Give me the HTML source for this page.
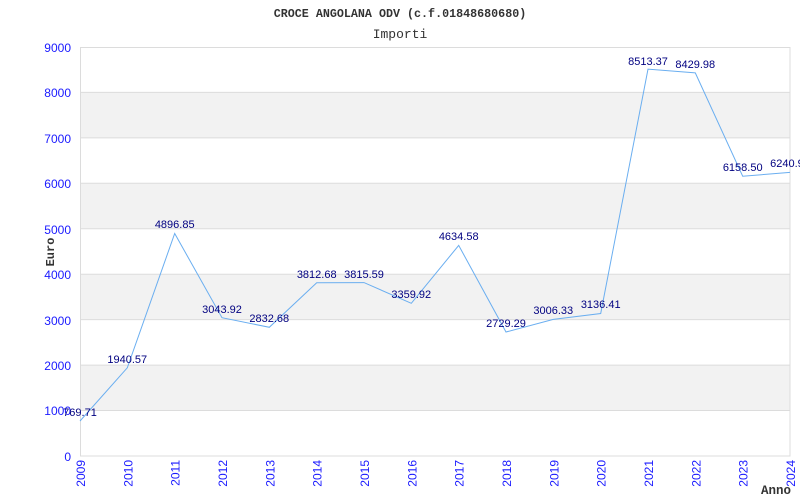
<!DOCTYPE html>
<html><head><style>body{margin:0;background:#fff}svg{display:block}</style></head><body>
<svg width="800" height="500" xmlns="http://www.w3.org/2000/svg">
<rect width="800" height="500" fill="#fff"/>
<g fill="#f2f2f2">
<rect x="80" y="92.4" width="710" height="45.4"/>
<rect x="80" y="183.3" width="710" height="45.4"/>
<rect x="80" y="274.2" width="710" height="45.4"/>
<rect x="80" y="365.1" width="710" height="45.4"/>
</g>
<g stroke="#dcdcdc" stroke-width="1">
<line x1="80" y1="92.4" x2="790" y2="92.4"/><line x1="80" y1="137.9" x2="790" y2="137.9"/>
<line x1="80" y1="183.3" x2="790" y2="183.3"/><line x1="80" y1="228.8" x2="790" y2="228.8"/>
<line x1="80" y1="274.2" x2="790" y2="274.2"/><line x1="80" y1="319.6" x2="790" y2="319.6"/>
<line x1="80" y1="365.1" x2="790" y2="365.1"/><line x1="80" y1="410.5" x2="790" y2="410.5"/>
<rect x="80.5" y="47.5" width="709.5" height="408.5" fill="none"/>
</g>
<polyline fill="none" stroke="#6aaef0" stroke-width="1" points="80,421 127.3,367.8 174.7,233.5 222,317.7 269.3,327.3 316.7,282.7 364,282.6 411.3,303.3 458.7,245.4 506,332 553.3,319.4 600.7,313.5 648,69.1 695.3,72.9 742.7,176.2 790,172.4"/>
<g font-family="Liberation Mono, monospace" fill="#333">
<text x="400" y="17" text-anchor="middle" font-size="11.7" font-weight="bold">CROCE ANGOLANA ODV (c.f.01848680680)</text>
<text x="400" y="38" text-anchor="middle" font-size="13">Importi</text>
<text transform="translate(54,252) rotate(-90)" text-anchor="middle" font-size="12" font-weight="bold">Euro</text>
<text x="761" y="494" font-size="12.5" font-weight="bold">Anno</text>
</g>
<g font-family="Liberation Sans, sans-serif" font-size="12" fill="#1a1aff" text-anchor="end">
<text x="71" y="52">9000</text><text x="71" y="97">8000</text><text x="71" y="143">7000</text>
<text x="71" y="188">6000</text><text x="71" y="234">5000</text><text x="71" y="279">4000</text>
<text x="71" y="325">3000</text><text x="71" y="370">2000</text><text x="71" y="415">1000</text>
<text x="71" y="461">0</text>
</g>
<g font-family="Liberation Sans, sans-serif" font-size="12" fill="#1a1aff" text-anchor="end">
<text transform="translate(85,460) rotate(-90)">2009</text>
<text transform="translate(132.3,460) rotate(-90)">2010</text>
<text transform="translate(179.7,460) rotate(-90)">2011</text>
<text transform="translate(227,460) rotate(-90)">2012</text>
<text transform="translate(274.3,460) rotate(-90)">2013</text>
<text transform="translate(321.7,460) rotate(-90)">2014</text>
<text transform="translate(369,460) rotate(-90)">2015</text>
<text transform="translate(416.3,460) rotate(-90)">2016</text>
<text transform="translate(463.7,460) rotate(-90)">2017</text>
<text transform="translate(511,460) rotate(-90)">2018</text>
<text transform="translate(558.3,460) rotate(-90)">2019</text>
<text transform="translate(605.7,460) rotate(-90)">2020</text>
<text transform="translate(653,460) rotate(-90)">2021</text>
<text transform="translate(700.3,460) rotate(-90)">2022</text>
<text transform="translate(747.7,460) rotate(-90)">2023</text>
<text transform="translate(795,460) rotate(-90)">2024</text>
</g>
<g font-family="Liberation Sans, sans-serif" font-size="11" fill="#000080" text-anchor="middle">
<text x="80" y="416">769.71</text>
<text x="127.3" y="363">1940.57</text>
<text x="174.7" y="228">4896.85</text>
<text x="222" y="313">3043.92</text>
<text x="269.3" y="322">2832.68</text>
<text x="316.7" y="278">3812.68</text>
<text x="364" y="278">3815.59</text>
<text x="411.3" y="298">3359.92</text>
<text x="458.7" y="240">4634.58</text>
<text x="506" y="327">2729.29</text>
<text x="553.3" y="314">3006.33</text>
<text x="600.7" y="308">3136.41</text>
<text x="648" y="65">8513.37</text>
<text x="695.3" y="68">8429.98</text>
<text x="742.7" y="171">6158.50</text>
<text x="790" y="167">6240.91</text>
</g>
</svg>
</body></html>
